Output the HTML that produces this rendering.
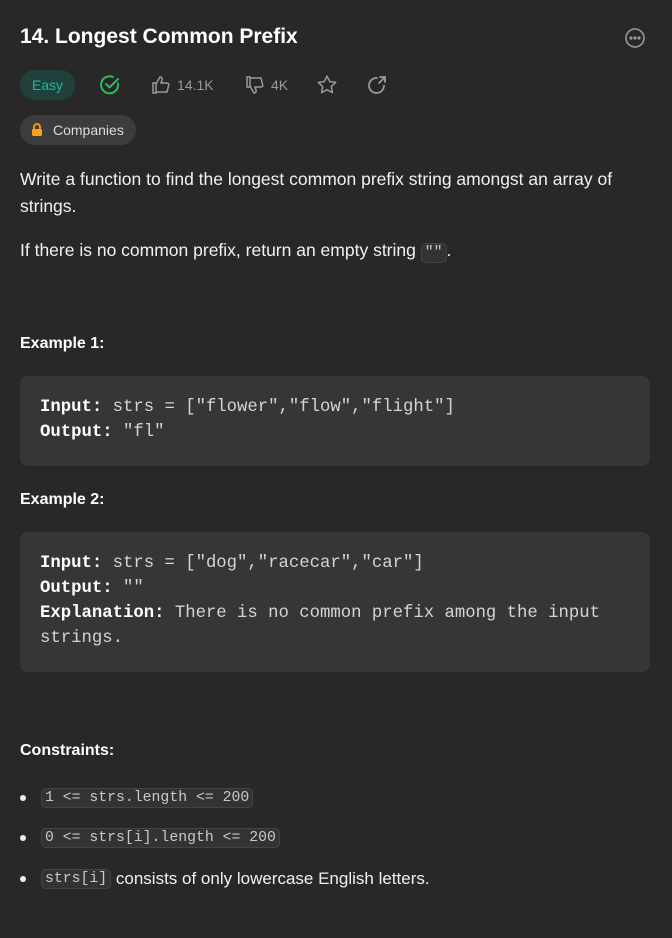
<!DOCTYPE html>
<html><head><meta charset="utf-8"><style>
*{margin:0;padding:0;box-sizing:border-box}
body{width:672px;height:938px;background:#282828;color:#eff1f6;font-family:"Liberation Sans",sans-serif;font-size:17.5px;overflow:hidden;position:relative}
.a{position:absolute}
h1{position:absolute;left:20px;top:25px;font-size:21px;font-weight:bold;color:#fff}
.tag{position:absolute;border-radius:15px;height:30px;line-height:30px;font-size:14px}
.ico{position:absolute;color:#9a9a9a;font-size:14px;display:flex;align-items:center;gap:6px}
p{position:absolute;left:20px;line-height:27px;color:#eff1f6}
.h{font-weight:bold;font-size:16px;color:#fff}
.code{position:absolute;left:20px;width:630px;background:#363636;border-radius:8px;font-family:"Liberation Mono",monospace;font-size:17.3px;line-height:25px;color:#d4d4d4;padding:19px 20px}
.code b{color:#fff}
.ic{font-family:"Liberation Mono",monospace;font-size:14.8px;background:#333;border:1px solid #444;border-radius:5px;padding:1px 3px;color:#c8c8c8}
.li{position:absolute;left:20px;display:flex;align-items:center;font-size:17px}
.li::before{content:"";width:6px;height:6px;border-radius:50%;background:#eee;margin-right:15px}
</style></head><body>
<h1>14. Longest Common Prefix</h1>
<svg class="a" style="left:624px;top:27px" width="22" height="22" viewBox="0 0 22 22" fill="none" stroke="#9a9a9a" stroke-width="1.6"><circle cx="11" cy="11" r="9"/><circle cx="7" cy="11" r=".8" fill="#9a9a9a"/><circle cx="11" cy="11" r=".8" fill="#9a9a9a"/><circle cx="15" cy="11" r=".8" fill="#9a9a9a"/></svg>
<div class="tag" style="left:20px;top:70px;width:55px;background:#20413b;color:#1cb8a0;text-align:center">Easy</div>
<svg class="a" style="left:99px;top:74px" width="22" height="22" viewBox="0 0 22 22" fill="none" stroke="#2cbb5d" stroke-width="2" stroke-linecap="round"><path d="M19 9.5A8.5 8.5 0 1 1 14 3"/><path d="M7 10l3.5 3.5L19 5"/></svg>
<div class="ico" style="left:151px;top:75px"><svg width="20" height="20" viewBox="0 0 20 20" fill="none" stroke="#9a9a9a" stroke-width="1.5"><path d="M2 8h3v10H2zM5 9l4-7c2 0 2.5 1.5 2 3l-1 3h6c1.2 0 2 1 1.7 2l-1.7 7H5"/></svg>14.1K</div>
<div class="ico" style="left:245px;top:75px"><svg width="20" height="20" viewBox="0 0 20 20" fill="none" stroke="#9a9a9a" stroke-width="1.5"><path d="M2 2h3v10H2zM5 11l4 7c2 0 2.5-1.5 2-3l-1-3h6c1.2 0 2-1 1.7-2L16 3H5"/></svg>4K</div>
<svg class="a" style="left:316px;top:74px" width="22" height="22" viewBox="0 0 22 22" fill="none" stroke="#9a9a9a" stroke-width="1.5" stroke-linejoin="round"><path d="M11 2l2.7 5.6 6 .8-4.4 4.2 1.1 6L11 15.7 5.6 18.6l1.1-6L2.3 8.4l6-.8z"/></svg>
<svg class="a" style="left:366px;top:74px" width="22" height="22" viewBox="0 0 22 22" fill="none" stroke="#9a9a9a" stroke-width="1.8" stroke-linecap="round"><path d="M18 11.5A7.5 7.5 0 1 1 11 4"/><path d="M13 9l6-6M14 3h5v5"/></svg>
<div class="tag" style="left:20px;top:115px;width:116px;background:#3c3c3c;color:#dcdcdc;padding-left:33px">Companies</div>
<svg class="a" style="left:31px;top:123px" width="12" height="14" viewBox="0 0 12 14"><path d="M3 6V4a3 3 0 0 1 6 0v2" fill="none" stroke="#ffa116" stroke-width="1.8"/><rect x="1" y="6" width="10" height="7" rx="1.5" fill="#ffa116"/></svg>
<p style="top:166px;width:640px">Write a function to find the longest common prefix string amongst an array of strings.</p>
<p style="top:237px">If there is no common prefix, return an empty string <span class="ic">""</span>.</p>
<p class="h" style="top:330px">Example 1:</p>
<div class="code" style="top:376px;height:90px"><b>Input:</b> strs = ["flower","flow","flight"]<br><b>Output:</b> "fl"</div>
<p class="h" style="top:486px">Example 2:</p>
<div class="code" style="top:532px;height:140px"><b>Input:</b> strs = ["dog","racecar","car"]<br><b>Output:</b> ""<br><b>Explanation:</b> There is no common prefix among the input strings.</div>
<p class="h" style="top:737px">Constraints:</p>
<div class="li" style="top:788px"><span class="ic">1 &lt;= strs.length &lt;= 200</span></div>
<div class="li" style="top:828px"><span class="ic">0 &lt;= strs[i].length &lt;= 200</span></div>
<div class="li" style="top:869px"><span class="ic">strs[i]</span>&nbsp;consists of only lowercase English letters.</div>
</body></html>
